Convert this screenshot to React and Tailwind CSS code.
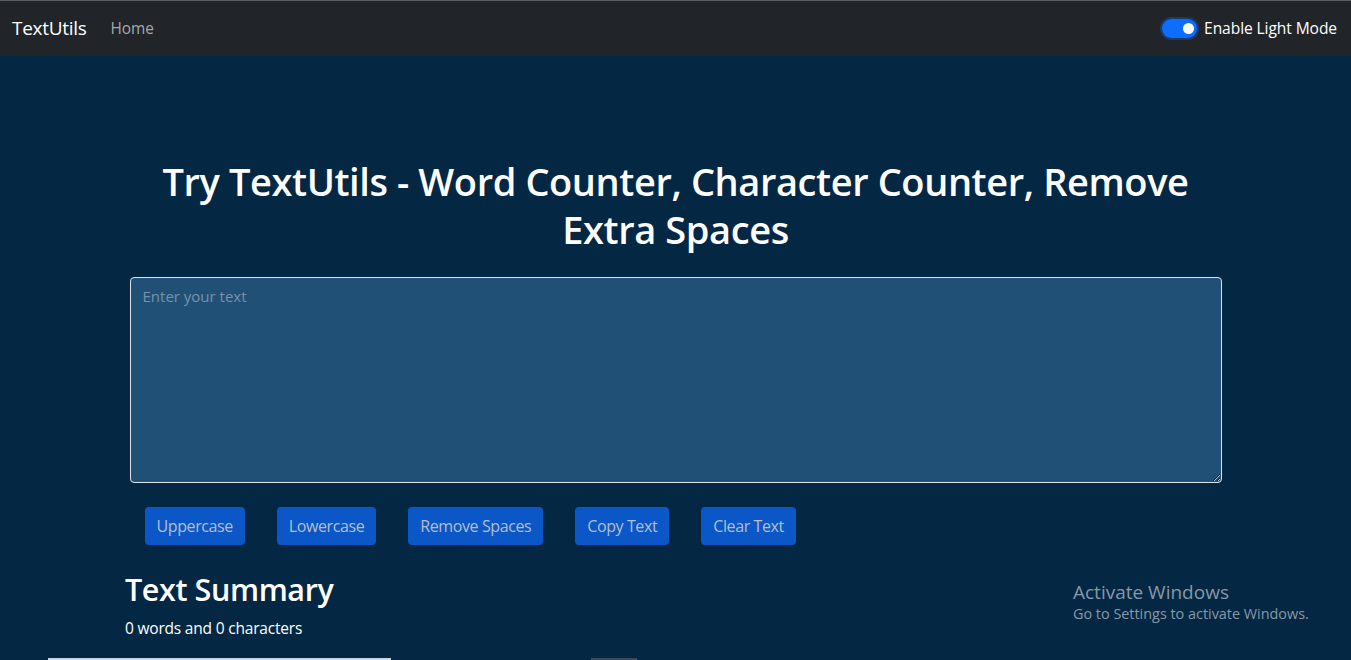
import React, { useState } from 'react';

const BUTTONS = ['Uppercase', 'Lowercase', 'Remove Spaces', 'Copy Text', 'Clear Text'];

export default function App() {
  const [text, setText] = useState('');
  const words = text.split(/\s+/).filter((w) => w.length !== 0).length;

  return (
    <div
      className="relative h-[660px] overflow-hidden bg-[#042743] text-white"
      style={{ fontFamily: '"Open Sans", "Noto Sans", sans-serif' }}
    >
      {/* Navbar */}
      <nav className="flex h-[56px] items-center justify-between border-t border-[#5b5d60] bg-[#212529] px-3">
        <div className="flex items-center">
          <span className="text-[19px] tracking-[-0.3px] text-white">TextUtils</span>
          <span className="ml-[24px] text-[15.4px] text-[#a6a8ab]">Home</span>
        </div>
        <div className="flex items-center gap-[7px] pr-[2px]">
          <div className="flex h-[19px] w-[35px] items-center justify-end rounded-full bg-[#0d6efd] px-[3px] shadow-[0_0_0_2px_rgba(13,110,253,0.3)]">
            <div className="h-[11px] w-[11px] rounded-full bg-white" />
          </div>
          <span className="text-[15.6px] tracking-[-0.1px] text-white">Enable Light Mode</span>
        </div>
      </nav>

      {/* Main */}
      <div className="mx-auto w-[1092px] pt-[101px]">
        <h1 className="text-center text-[38px] font-semibold leading-[48px] tracking-[-0.4px]">
          Try TextUtils - Word Counter, Character Counter, Remove Extra Spaces
        </h1>
        <textarea
          value={text}
          onChange={(e) => setText(e.target.value)}
          placeholder="Enter your text"
          rows={8}
          className="mt-[24px] block h-[206px] w-full rounded-[4px] border border-[#dee2e6] bg-[#215077] px-3 py-[7px] text-[15px] text-white outline-none placeholder:text-[#7790a8]"
        />
        <div className="mt-[24px] flex gap-[32px] pl-[15px]">
          {BUTTONS.map((label) => (
            <button
              key={label}
              className="h-[38px] rounded-[4px] bg-[#0b57c7] px-[12px] text-[16px] tracking-[-0.4px] text-[#b3bfcf]"
            >
              {label}
            </button>
          ))}
        </div>
      </div>

      <div className="ml-[125px] mt-[25px]">
        <h2 className="text-[30.5px] font-semibold leading-[38px] tracking-[-0.4px]">Text Summary</h2>
        <p className="mt-[9px] text-[15.5px] tracking-[-0.2px]">
          {words} words and {text.length} characters
        </p>
      </div>

      {/* bottom strip of next content */}
      <div className="absolute bottom-0 left-0 flex h-[2px] w-full">
        <div className="ml-[48px] w-[343px] bg-[#c8d6e0]" />
        <div className="ml-[200px] w-[46px] bg-[#3b4a57]" />
      </div>

      {/* Activation watermark */}
      <div className="pointer-events-none absolute left-[1073px] top-[580px] text-[#8797a8]">
        <div className="text-[19px] leading-[24px]">Activate Windows</div>
        <div className="text-[14.4px] leading-[20px]">Go to Settings to activate Windows.</div>
      </div>
    </div>
  );
}
